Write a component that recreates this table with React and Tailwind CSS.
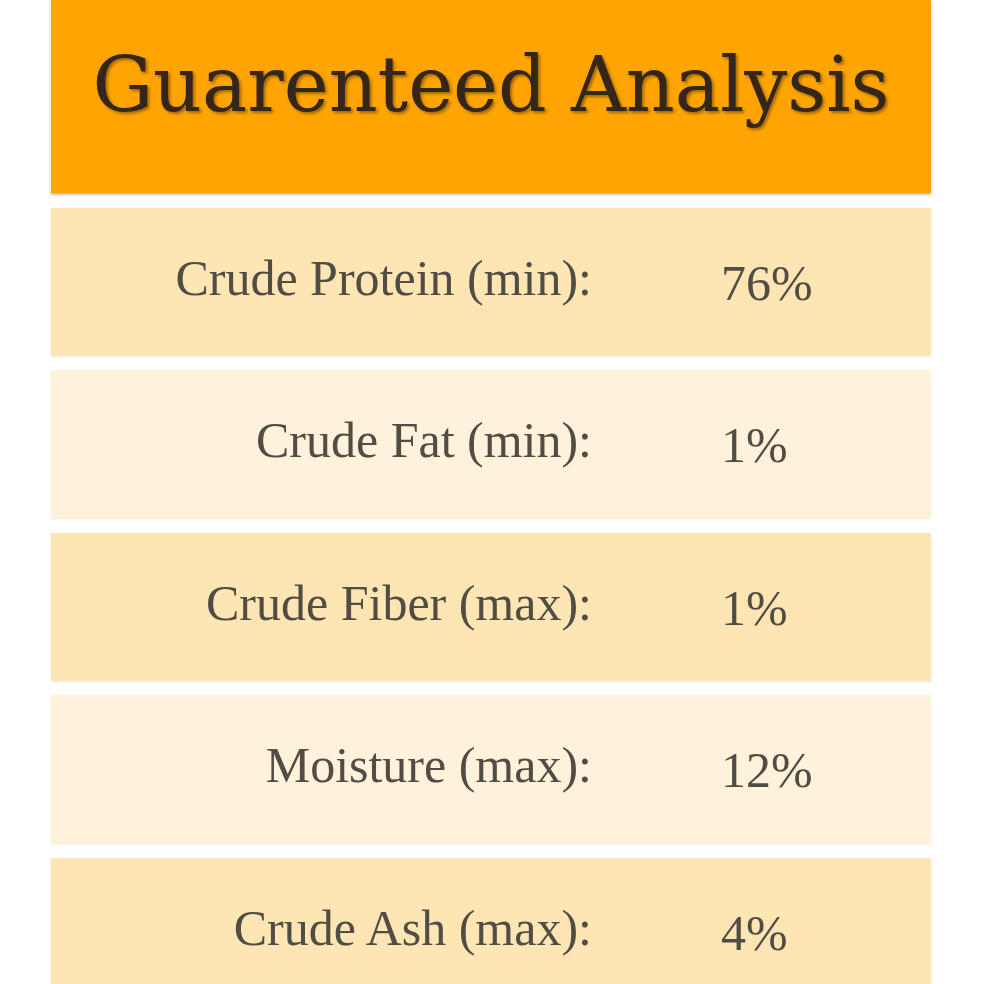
const rows = [
  { label: 'Crude Protein (min):', value: '76%' },
  { label: 'Crude Fat (min):', value: '1%' },
  { label: 'Crude Fiber (max):', value: '1%' },
  { label: 'Moisture (max):', value: '12%' },
  { label: 'Crude Ash (max):', value: '4%' },
];

const App = () => {
  return (
    <div className="h-[984px] w-full overflow-hidden bg-white">
      <div className="ml-[51px] flex w-[880px] flex-col gap-[14.5px]">
        <div className="h-[193px] bg-[#FFA503] pt-[47px] text-center shadow-[0_2px_2px_rgba(90,70,30,0.35)]">
          <h1 className="font-['DejaVu_Serif',serif] text-[76px] leading-none text-[#35261a] [text-shadow:2px_2px_3px_rgba(70,40,0,0.5)]">
            Guarenteed Analysis
          </h1>
        </div>

        {rows.map((row, i) => (
          <div
            key={row.label}
            className={`flex h-[148px] shrink-0 items-center pb-[8px] font-['Liberation_Serif',serif] text-[50px] leading-none text-[#514c44] shadow-[0_1px_2px_rgba(200,170,120,0.25)] ${
              i % 2 === 0 ? 'bg-[#FEE5B4]' : 'bg-[#FEF2DB]'
            }`}
          >
            <div className="w-[541px] text-right">{row.label}</div>
            <div className="ml-[129px] translate-y-[5px]">{row.value}</div>
          </div>
        ))}
      </div>
    </div>
  );
};

export default App;
